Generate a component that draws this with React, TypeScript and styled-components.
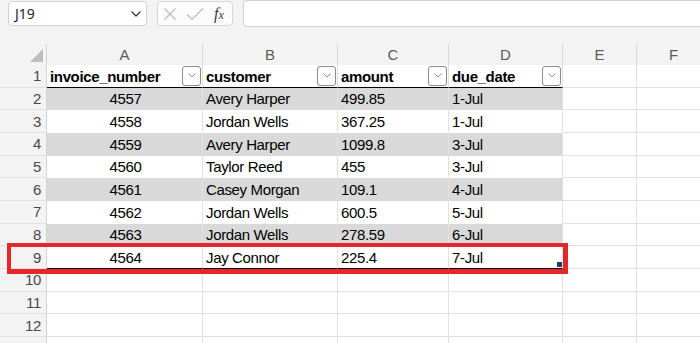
import React from "react";
import styled, { createGlobalStyle, css } from "styled-components";

const GlobalStyle = createGlobalStyle`
  html, body { margin: 0; padding: 0; background: #f3f3f3; overflow: hidden; }
  * { box-sizing: border-box; }
`;

const Page = styled.div`
  position: relative;
  width: 700px;
  height: 343px;
  overflow: hidden;
  background: #f3f3f3;
  font-family: "Liberation Sans", Arial, sans-serif;
`;

const Toolbar = styled.div`
  display: flex;
  align-items: flex-start;
  height: 27px;
  padding-left: 8px;
`;

const NameBox = styled.div`
  display: flex;
  align-items: center;
  justify-content: space-between;
  width: 139px;
  height: 25px;
  margin-top: 1px;
  padding: 0 5px 0 6px;
  background: #fff;
  border: 1px solid #d1d1d1;
  border-radius: 4px;
  font-family: "Noto Sans", "Open Sans", sans-serif;
  font-size: 14px;
  color: #1f1f1f;
`;

const FxBox = styled.div`
  display: flex;
  align-items: center;
  width: 76px;
  height: 25px;
  margin: 1px 0 0 10px;
  padding: 0 4px 0 5px;
  gap: 9px;
  background: #fcfcfc;
  border: 1px solid #d6d6d6;
  border-radius: 4px;
`;

const FxLabel = styled.span`
  font-family: "Liberation Serif", "DejaVu Serif", serif;
  font-style: italic;
  font-size: 16px;
  color: #3b3b3b;
  margin-left: 1px;
  & > small {
    font-size: 12px;
  }
`;

const FormulaInput = styled.div`
  flex: 1;
  height: 27px;
  margin-left: 10px;
  background: #fff;
  border: 1px solid #d1d1d1;
  border-right: none;
  border-radius: 4px 0 0 4px;
`;

const Sheet = styled.div`
  position: relative;
  margin-top: 17px;
  display: grid;
  grid-template-columns: 47px 156px 135px 111px 114px 74px 74px;
  grid-template-rows: 21px repeat(13, 22.67px);
`;

const Corner = styled.div`
  display: flex;
  align-items: flex-end;
  justify-content: flex-end;
  padding: 0 3px 3px 0;
  border-right: 1px solid #d4d4d4;
`;

const ColHeader = styled.div`
  display: flex;
  align-items: center;
  justify-content: center;
  border-right: 1px solid #d9d9d9;
  font-family: "Liberation Sans", Arial, sans-serif;
  font-size: 15px;
  color: #5c5c5c;
`;

const RowHeader = styled.div`
  display: flex;
  align-items: center;
  justify-content: flex-end;
  padding-right: 5px;
  border-right: 1px solid #d4d4d4;
  border-bottom: 1px solid #e1e1e1;
  font-family: "Liberation Sans", Arial, sans-serif;
  font-size: 15px;
  letter-spacing: -0.3px;
  color: #4a4a4a;
`;

type CellKind = "head" | "band" | "plain" | "last" | "empty";

const Cell = styled.div<{ $kind: CellKind; $align?: "left" | "center" }>`
  position: relative;
  display: flex;
  align-items: center;
  justify-content: ${(p) => (p.$align === "center" ? "center" : "space-between")};
  padding: 1px 1px 0 3px;
  font-size: 15px;
  letter-spacing: -0.35px;
  color: #000;
  white-space: nowrap;
  border-right: 1px solid #e1e1e1;
  ${(p) =>
    p.$kind === "head" &&
    css`
      background: #fff;
      font-weight: 700;
      border-bottom: 1px solid #000;
    `}
  ${(p) =>
    p.$kind === "band" &&
    css`
      background: #d9d9d9;
      border-bottom: 1px solid #d9d9d9;
    `}
  ${(p) =>
    p.$kind === "plain" &&
    css`
      background: #fff;
      border-bottom: 1px solid #fff;
    `}
  ${(p) =>
    p.$kind === "last" &&
    css`
      background: #fff;
      border-bottom: 1px solid #000;
    `}
  ${(p) =>
    p.$kind === "empty" &&
    css`
      background: #fff;
      border-bottom: 1px solid #e1e1e1;
    `}
`;

const FilterButton = styled.div`
  display: flex;
  align-items: center;
  justify-content: center;
  width: 19px;
  height: 20px;
  margin-top: -1px;
  background: #fff;
  border: 1px solid #8c8c8c;
  border-radius: 3px;
`;

const Highlight = styled.div`
  position: absolute;
  left: 7px;
  top: 199px;
  width: 561px;
  height: 31px;
  border: 4px solid #e5262b;
  border-right-width: 5px;
  border-bottom-width: 5px;
  pointer-events: none;
`;

const ResizeHandle = styled.div`
  position: absolute;
  right: 0;
  bottom: 1px;
  width: 5px;
  height: 5px;
  background: #1e3f66;
`;

const Chevron = ({ size = 9, color = "#444" }: { size?: number; color?: string }) => (
  <svg width={size} height={size * 0.6} viewBox="0 0 10 6" fill="none">
    <path d="M1 1l4 4 4-4" stroke={color} strokeWidth="1.2" strokeLinecap="round" strokeLinejoin="round" />
  </svg>
);

const Triangle = () => (
  <svg width="13" height="13" viewBox="0 0 13 13">
    <polygon points="13,0 13,13 0,13" fill="#bdbdbd" />
  </svg>
);

type Row = { n: string; c: string; a: string; d: string };

const rows: Row[] = [
  { n: "4557", c: "Avery Harper", a: "499.85", d: "1-Jul" },
  { n: "4558", c: "Jordan Wells", a: "367.25", d: "1-Jul" },
  { n: "4559", c: "Avery Harper", a: "1099.8", d: "3-Jul" },
  { n: "4560", c: "Taylor Reed", a: "455", d: "3-Jul" },
  { n: "4561", c: "Casey Morgan", a: "109.1", d: "4-Jul" },
  { n: "4562", c: "Jordan Wells", a: "600.5", d: "5-Jul" },
  { n: "4563", c: "Jordan Wells", a: "278.59", d: "6-Jul" },
  { n: "4564", c: "Jay Connor", a: "225.4", d: "7-Jul" },
];

const headers = ["invoice_number", "customer", "amount", "due_date"];
const letters = ["A", "B", "C", "D", "E", "F"];

export default function App() {
  return (
    <>
      <GlobalStyle />
      <Page>
        <Toolbar>
          <NameBox>
            <span>J19</span>
            <Chevron size={10} color="#333" />
          </NameBox>
          <FxBox>
            <svg width="14" height="14" viewBox="0 0 14 14">
              <path d="M1.5 1.5l11 11M12.5 1.5l-11 11" stroke="#bdbdbd" strokeWidth="1.2" />
            </svg>
            <svg width="18" height="14" viewBox="0 0 18 14">
              <path d="M1 7.5l5 5L17 1.5" stroke="#bdbdbd" strokeWidth="1.2" fill="none" />
            </svg>
            <FxLabel>
              f<small>x</small>
            </FxLabel>
          </FxBox>
          <FormulaInput />
        </Toolbar>
        <Sheet>
          <Corner>
            <Triangle />
          </Corner>
          {letters.map((l) => (
            <ColHeader key={l}>{l}</ColHeader>
          ))}

          <RowHeader>1</RowHeader>
          {headers.map((h) => (
            <Cell key={h} $kind="head">
              <span>{h}</span>
              <FilterButton>
                <Chevron size={8} color="#8a8a8a" />
              </FilterButton>
            </Cell>
          ))}
          <Cell $kind="empty" />
          <Cell $kind="empty" />

          {rows.map((r, i) => {
            const kind: CellKind = i === rows.length - 1 ? "last" : i % 2 === 0 ? "band" : "plain";
            return (
              <React.Fragment key={r.n}>
                <RowHeader>{i + 2}</RowHeader>
                <Cell $kind={kind} $align="center">
                  {r.n}
                </Cell>
                <Cell $kind={kind}>{r.c}</Cell>
                <Cell $kind={kind}>{r.a}</Cell>
                <Cell $kind={kind}>
                  {r.d}
                  {i === rows.length - 1 && <ResizeHandle />}
                </Cell>
                <Cell $kind="empty" />
                <Cell $kind="empty" />
              </React.Fragment>
            );
          })}

          {[10, 11, 12, 13].map((n) => (
            <React.Fragment key={n}>
              <RowHeader>{n}</RowHeader>
              {letters.map((l) => (
                <Cell key={l} $kind="empty" />
              ))}
            </React.Fragment>
          ))}
          <Highlight />
        </Sheet>
      </Page>
    </>
  );
}
